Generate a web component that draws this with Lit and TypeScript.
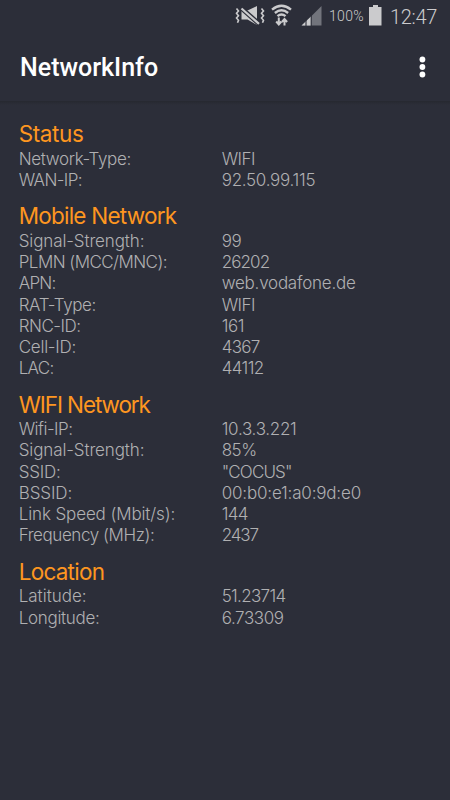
import { LitElement, html, css } from "lit";
import { customElement, property } from "lit/decorators.js";
import { styleMap } from "lit/directives/style-map.js";

interface Label {
  text: string;
  tracking: number;
}
interface Section {
  title: Label;
  rows: [Label, Label][];
}

const t = (text: string, tracking = -0.2): Label => ({ text, tracking });

const SECTIONS: Section[] = [
  {
    title: t("Status", -0.4),
    rows: [
      [t("Network-Type:", -0.35), t("WIFI", -0.55)],
      [t("WAN-IP:", -0.6), t("92.50.99.115", -0.28)],
    ],
  },
  {
    title: t("Mobile Network", -0.77),
    rows: [
      [t("Signal-Strength:", -0.12), t("99", -0.4)],
      [t("PLMN (MCC/MNC):", -0.54), t("26202", -0.9)],
      [t("APN:", -0.75), t("web.vodafone.de", -0.24)],
      [t("RAT-Type:", -0.4), t("WIFI", -0.55)],
      [t("RNC-ID:", -0.5), t("161", -0.4)],
      [t("Cell-ID:", -0.25), t("4367", -0.75)],
      [t("LAC:", -0.7), t("44112", -0.6)],
    ],
  },
  {
    title: t("WIFI Network", -1.1),
    rows: [
      [t("Wifi-IP:", -0.5), t("10.3.3.221", -0.28)],
      [t("Signal-Strength:", -0.12), t("85%", -0.5)],
      [t("SSID:", -0.2), t('"COCUS"', -0.85)],
      [t("BSSID:", -0.1), t("00:b0:e1:a0:9d:e0", -0.18)],
      [t("Link Speed (Mbit/s):", -0.12), t("144", -0.7)],
      [t("Frequency (MHz):", -0.42), t("2437", -1.1)],
    ],
  },
  {
    title: t("Location", -0.75),
    rows: [
      [t("Latitude:", 0), t("51.23714", -0.68)],
      [t("Longitude:", -0.3), t("6.73309", -0.4)],
    ],
  },
];

const label = (l: Label) =>
  html`<span style=${styleMap({ letterSpacing: `${l.tracking}px` })}>${l.text}</span>`;

@customElement("status-bar")
export class StatusBar extends LitElement {
  static styles = css`
    :host {
      display: flex;
      justify-content: flex-end;
      align-items: flex-start;
      height: 34px;
      color: #cbcbcd;
      font-family: Roboto, sans-serif;
    }
    .icons { flex: none; display: block; }
    .percent {
      font-size: 14px;
      line-height: 33px;
      width: 39px;
      letter-spacing: 0.3px;
      font-weight: 350;
      white-space: nowrap;
    }
    .battery { flex: none; display: block; }
    .clock {
      font-size: 20px;
      line-height: 34px;
      width: 60px;
      letter-spacing: -0.3px;
      font-weight: 350;
      white-space: nowrap;
    }
  `;
  render() {
    return html`
      <svg class="icons" width="104" height="34" viewBox="225 0 104 34">
        <g fill="none" stroke="#cbcbcd" stroke-width="1.6">
          <path d="M236.500 8.500l2 2.500-2 2.300 2 2.400-2 2.300 2 2.300-1 2.500" />
          <path d="M261.500 8.500l2 2.500-2 2.300 2 2.400-2 2.300 2 2.300-1 2.500" />
        </g>
        <path fill="#cbcbcd" d="M241.500 10.500h6L257 6V25l-9.500-5.500h-6z" />
        <path d="M242 8.800L259 23.700" stroke="#2c2e39" stroke-width="4.600" />
        <path d="M241.500 8.500L259 23.900" stroke="#cbcbcd" stroke-width="2.200" />
        <g fill="none" stroke="#cbcbcd" stroke-width="2.400">
          <path d="M272 9.600Q281.500 1.800 291 9.600" />
          <path d="M274.900 13Q281.500 7.500 288.100 13" />
          <path d="M277.500 16.200Q281.500 12.700 285.500 16.200" />
        </g>
        <g fill="none" stroke="#cbcbcd" stroke-width="2">
          <path d="M278.800 17.500v7M276.200 21.500l2.600 3 2.600-3" />
          <path d="M284.500 25.500v-6.500M281.900 22l2.600-3 2.600 3" />
        </g>
        <path fill="#72747c" d="M321.500 6v19.500H302z" />
        <path fill="#cbcbcd" d="M311 16.500v9H301.500z" />
        <path d="M306 18v8M311.200 13v13" stroke="#2c2e39" stroke-width="1.100" />
      </svg>
      <span class="percent">100%</span>
      <svg class="battery" width="22" height="34" viewBox="368 0 22 34">
        <path fill="#cbcbcd" d="M373 5h5v2h3.500v18.500h-12.500V7h4z" />
      </svg>
      <span class="clock">12:47</span>
    `;
  }
}

@customElement("info-section")
export class InfoSection extends LitElement {
  @property({ attribute: false }) section!: Section;
  static styles = css`
    :host { display: block; margin-bottom: 11.100px; }
    .title {
      margin: 0 0 0.400px;
      font-size: 22.500px;
      font-weight: 400;
      line-height: 28.200px;
      color: #fe9620;
    }
    .row {
      display: grid;
      grid-template-columns: 203px 1fr;
      font-size: 17px;
      line-height: 21.250px;
      font-weight: 300;
      color: #b0b0b2;
      white-space: nowrap;
    }
  `;
  render() {
    return html`
      <h2 class="title">${label(this.section.title)}</h2>
      ${this.section.rows.map(
        ([name, value]) => html`<div class="row">${label(name)}${label(value)}</div>`
      )}
    `;
  }
}

@customElement("app-root")
export class AppRoot extends LitElement {
  static styles = css`
    :host {
      display: flex;
      flex-direction: column;
      height: 100vh;
      overflow: hidden;
      background: #2c2e39;
      font-family: Inter, sans-serif;
    }
    .bar {
      display: flex;
      align-items: center;
      justify-content: space-between;
      height: 67px;
      padding: 0 20px;
      font: 500 25px/67px Roboto, sans-serif;
      color: #fff;
    }
    .menu { display: block; }
    .edge {
      height: 4px;
      background: linear-gradient(#262830, #2c2e39);
    }
    .content { padding: 15px 18.700px 0; }
  `;
  render() {
    return html`
      <status-bar></status-bar>
      <header class="bar">
        <span>NetworkInfo</span>
        <svg class="menu" width="16" height="24" viewBox="0 0 16 24" fill="#fff">
          <circle cx="8.400" cy="3.500" r="2.900" />
          <circle cx="8.400" cy="11" r="2.900" />
          <circle cx="8.400" cy="18.500" r="2.900" />
        </svg>
      </header>
      <div class="edge"></div>
      <main class="content">
        ${SECTIONS.map((s) => html`<info-section .section=${s}></info-section>`)}
      </main>
    `;
  }
}
